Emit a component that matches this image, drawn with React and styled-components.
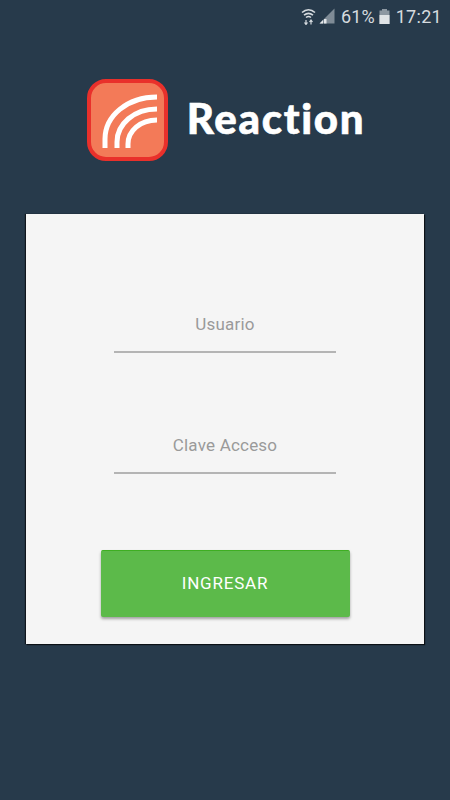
import styled, { createGlobalStyle } from "styled-components";

const GlobalStyle = createGlobalStyle`
  html, body {
    margin: 0;
    padding: 0;
    background: #273a4b;
  }
`;

const Screen = styled.div`
  width: 450px;
  height: 800px;
  background: #273a4b;
  overflow: hidden;
  font-family: Roboto, sans-serif;
`;

const StatusBar = styled.div`
  height: 32px;
  display: flex;
  align-items: center;
  justify-content: flex-end;
  padding-right: 8px;
  color: #d6dbdf;
  font-size: 18px;
`;

const SignalSlot = styled.span`
  display: flex;
  margin: 0 6px 0 3px;
`;

const Percent = styled.span`
  letter-spacing: 0.1px;
  margin-right: 4px;
`;

const Clock = styled.span`
  margin-left: 6px;
  letter-spacing: 0.3px;
`;

const Brand = styled.div`
  display: flex;
  align-items: center;
  justify-content: center;
  gap: 19px;
  height: 84px;
  margin: 46px 0 52px;
  padding-left: 2px;
`;

const BrandName = styled.div`
  font-family: Lato, sans-serif;
  font-weight: 900;
  font-size: 42px;
  line-height: 1;
  letter-spacing: 1.7px;
  font-variant-ligatures: none;
  -webkit-text-stroke: 0.6px #fff;
  color: #fff;
  padding-bottom: 5px;
`;

const Card = styled.form`
  width: 398px;
  height: 430px;
  margin: 0 auto;
  box-sizing: border-box;
  background: #f5f5f5;
  box-shadow: -1px 0 1px #10161d, 1px 1px 1px #0c1116;
  padding-top: 94px;
  display: flex;
  flex-direction: column;
  align-items: center;
`;

const Field = styled.div`
  width: 222px;
  height: 45px;
  margin-bottom: 76px;
  display: flex;
  align-items: flex-start;
  justify-content: center;
  border-bottom: 2px solid #b4b4b4;
  box-sizing: border-box;
  color: #9a9a9a;
  font-size: 17px;
  line-height: 33px;
  letter-spacing: 0.2px;
`;

const Submit = styled.button`
  width: 249px;
  height: 67px;
  padding: 0 0 3px;
  border: 0;
  border-top: 1px solid #3eae22;
  border-radius: 2px;
  background: #5cba4a;
  box-shadow: 0 2px 3px rgba(0, 0, 0, 0.35);
  color: #fff;
  font-family: Roboto, sans-serif;
  font-size: 17px;
  letter-spacing: 0.8px;
`;

function WifiIcon() {
  return (
    <svg width="15" height="17" viewBox="0 0 15 17" fill="none" stroke="#d6dbdf">
      <path d="M1 4.5C5 1 10 1 14 4.5" strokeWidth="1.6" />
      <path d="M3 7.2C6 4.8 9 4.8 12 7.2" strokeWidth="1.6" />
      <path d="M5 9.5C6.5 8.3 8.5 8.3 10 9.5" strokeWidth="1.5" />
      <path d="M5 12v4M3.5 14.5L5 16.5 6.5 14.5M10 16.5v-4M8.5 14L10 12 11.5 14" strokeWidth="1.2" />
    </svg>
  );
}

function SignalIcon() {
  return (
    <svg width="16" height="16" viewBox="0 0 16 16">
      <path d="M15.5 0.5V15.5H0.5Z" fill="#7f8b96" />
      <path d="M0.5 15.5L4 12V15.5ZM5 11H7.5V15.5H5Z" fill="#e4e7ea" />
    </svg>
  );
}

function BatteryIcon() {
  return (
    <svg width="11" height="15" viewBox="0 0 11 15">
      <path d="M3 0H8V1.5H10.5V15H0.5V1.5H3Z" fill="#8d98a2" />
      <path d="M0.5 6H10.5V15H0.5Z" fill="#dfe3e6" />
    </svg>
  );
}

function LogoMark() {
  return (
    <svg width="81" height="82" viewBox="0 0 81 82" fill="none">
      <rect x="2" y="2" width="77" height="78" rx="17" fill="#f37a58" stroke="#e9302b" strokeWidth="4" />
      <g stroke="#fff" strokeWidth="5">
        <path d="M18 69V60C18 37 40 18 70 18" />
        <path d="M30 69V63C30 45 47 30 70 30" />
        <path d="M41 69V65C41 52 53 41 70 41" />
      </g>
    </svg>
  );
}

export default function App() {
  return (
    <Screen>
      <GlobalStyle />
      <StatusBar>
        <WifiIcon />
        <SignalSlot>
          <SignalIcon />
        </SignalSlot>
        <Percent>61%</Percent>
        <BatteryIcon />
        <Clock>17:21</Clock>
      </StatusBar>
      <Brand>
        <LogoMark />
        <BrandName>Reaction</BrandName>
      </Brand>
      <Card>
        <Field>Usuario</Field>
        <Field>Clave Acceso</Field>
        <Submit type="button">INGRESAR</Submit>
      </Card>
    </Screen>
  );
}
